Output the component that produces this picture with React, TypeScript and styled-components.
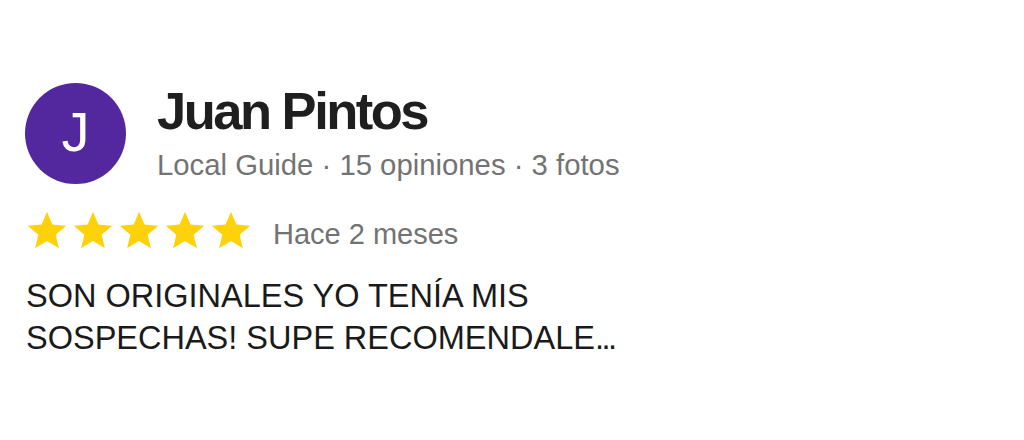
import styled, { createGlobalStyle } from "styled-components";

const GlobalStyle = createGlobalStyle`
  html, body {
    margin: 0;
    padding: 0;
    background: #ffffff;
  }

  body {
    font-family: "Liberation Sans", Arial, sans-serif;
  }
`;

const ReviewCard = styled.div`
  width: 1024px;
  height: 440px;
  box-sizing: border-box;
  padding: 83px 0 0 25px;
  background: #ffffff;
`;

const Header = styled.div`
  display: flex;
  align-items: flex-start;
  gap: 31px;
`;

const Avatar = styled.div`
  width: 101px;
  height: 101px;
  flex-shrink: 0;
  border-radius: 50%;
  background: #53289f;
  color: #ffffff;

  display: flex;
  align-items: center;
  justify-content: center;

  font-size: 56px;
  line-height: 1;
  padding-bottom: 3px;
  box-sizing: border-box;
`;

const Author = styled.div`
  display: flex;
  flex-direction: column;
  gap: 6px;
  margin-top: -2px;
`;

const Name = styled.div`
  font-size: 52.5px;
  line-height: 60px;
  font-weight: 700;
  letter-spacing: -2.5px;
  color: #1f1f1f;
`;

const Meta = styled.div`
  font-size: 29.3px;
  line-height: 36px;
  color: #737373;
`;

const RatingRow = styled.div`
  display: flex;
  align-items: center;
  margin-top: 24px;
`;

const Stars = styled.div`
  display: flex;
  margin-left: -1px;
`;

const StarIcon = styled.svg`
  width: 46px;
  height: 46px;
  display: block;
  fill: #fdd20b;
`;

const Age = styled.span`
  margin-left: 19px;
  margin-top: 6px;
  font-size: 29px;
  line-height: 1;
  color: #737373;
`;

const ReviewText = styled.p`
  margin: 21px 0 0 1px;
  width: 620px;
  font-size: 32.5px;
  line-height: 42px;
  color: #1a1a1a;
`;

const Ellipsis = styled.span`
  letter-spacing: -2.5px;
`;

const Star = () => (
  <StarIcon viewBox="0 0 24 24">
    <path d="M12 17.27L18.18 21l-1.64-7.03L22 9.24l-7.19-.61L12 2 9.19 8.63 2 9.24l5.46 4.73L5.82 21z" />
  </StarIcon>
);

const App = () => {
  const rating = 5;

  return (
    <>
      <GlobalStyle />
      <ReviewCard>
        <Header>
          <Avatar>J</Avatar>
          <Author>
            <Name>Juan Pintos</Name>
            <Meta>Local Guide · 15 opiniones · 3 fotos</Meta>
          </Author>
        </Header>
        <RatingRow>
          <Stars>
            {Array.from({ length: rating }).map((_, i) => (
              <Star key={i} />
            ))}
          </Stars>
          <Age>Hace 2 meses</Age>
        </RatingRow>
        <ReviewText>
          SON ORIGINALES YO TENÍA MIS
          <br />
          SOSPECHAS! SUPE RECOMENDALE<Ellipsis>...</Ellipsis>
        </ReviewText>
      </ReviewCard>
    </>
  );
};

export default App;
